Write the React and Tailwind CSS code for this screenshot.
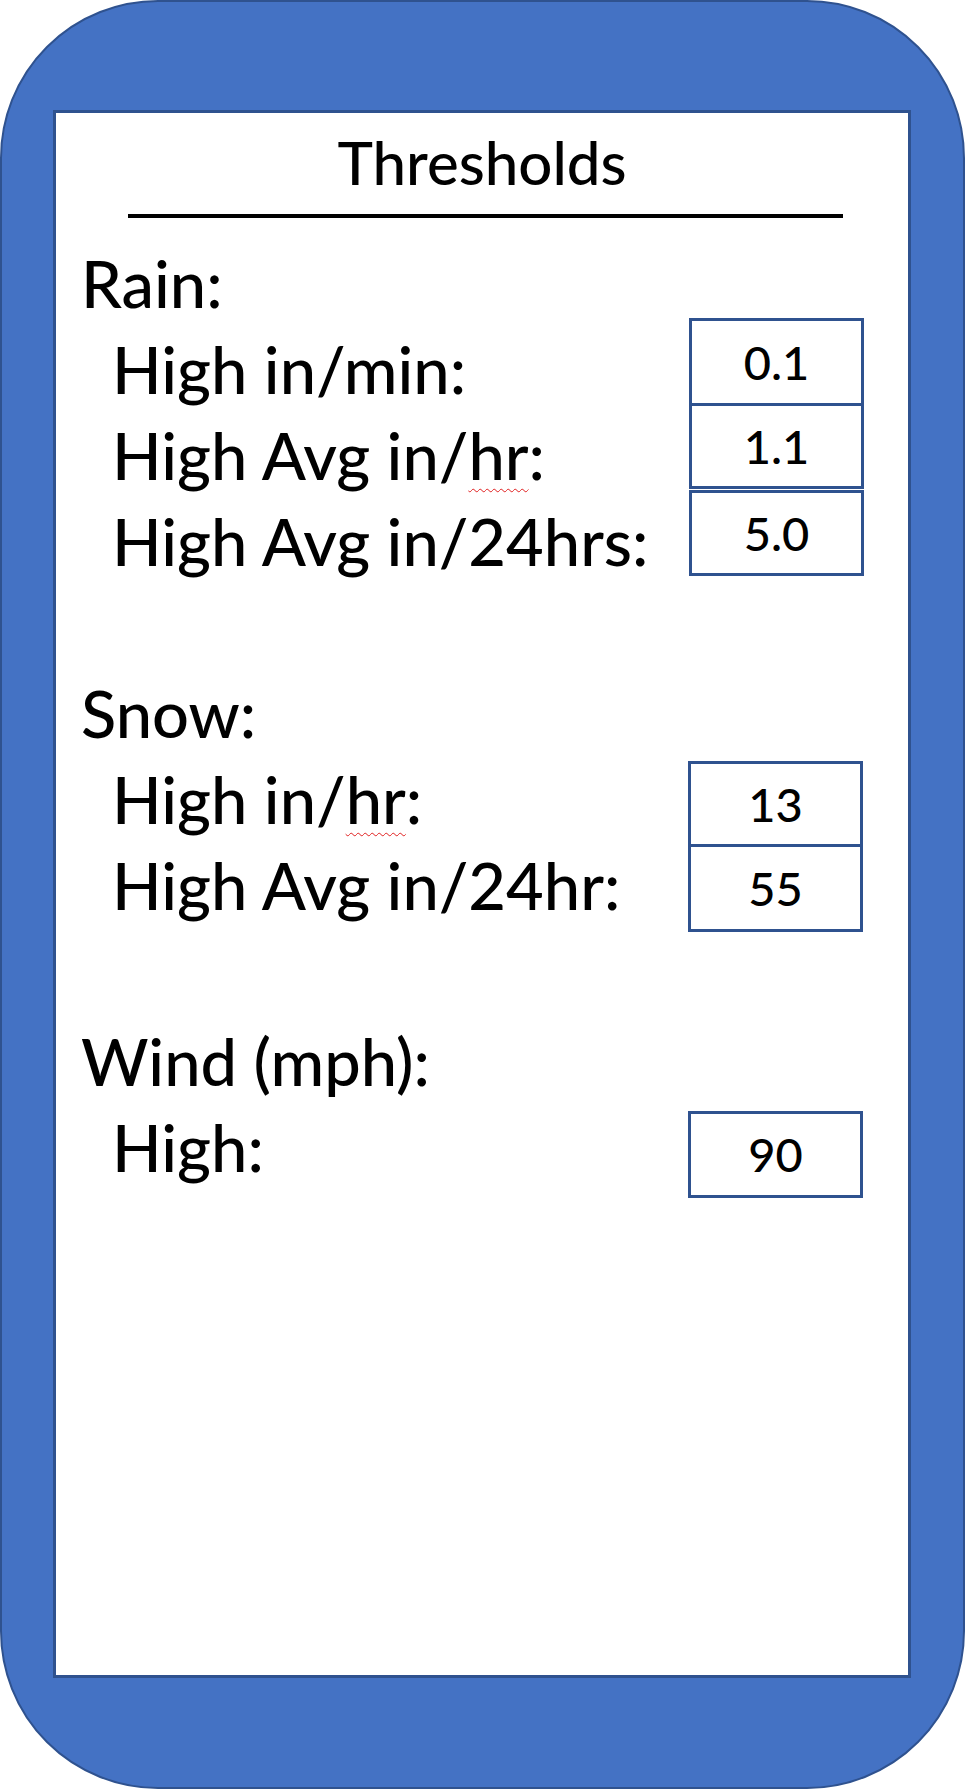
import React from "react";

function Hr() {
  return (
    <span className="underline decoration-wavy decoration-[#e02020] decoration-[1px] underline-offset-[8px]">hr</span>
  );
}

function Cell({ children, className = "" }) {
  return (
    <div
      className={
        "w-[175px] border-[3px] border-[#2F528F] bg-white flex items-center justify-center text-[47px] leading-none text-black " +
        className
      }
    >
      {children}
    </div>
  );
}

function Line({ children, indent }) {
  return (
    <div className={"h-[86px] leading-[86px] whitespace-nowrap " + (indent ? "pl-[31px]" : "")}>
      {children}
    </div>
  );
}

export default function App() {
  return (
    <div className="w-[965px] h-[1789px] bg-white font-['Lato',sans-serif] font-medium text-black">
      <div className="w-[965px] h-[1789px] bg-[#4472C4] border-2 border-[#2F528F] rounded-[158px] pt-[108px] pl-[51px]">
        <div className="w-[858px] h-[1568px] bg-white border-[3px] border-[#2F528F] flex flex-col">
          <div className="mt-[14px] h-[70px] leading-[70px] text-[60px] text-center">Thresholds</div>
          <div className="mt-[17px] ml-[72px] w-[715px] h-[4px] bg-black"></div>

          <div className="mt-[22px] pl-[25px] text-[65px] flex flex-col">
            {/* Rain */}
            <div className="flex">
              <div className="w-[608px] flex flex-col">
                <Line>Rain:</Line>
                <Line indent>High in/min:</Line>
                <Line indent>
                  High Avg in/<Hr />:
                </Line>
                <Line indent>High Avg in/24hrs:</Line>
              </div>
              <div className="mt-[78px] flex flex-col">
                <Cell className="h-[88px]">0.1</Cell>
                <Cell className="h-[86px] -mt-[3px]">1.1</Cell>
                <Cell className="h-[86px] mt-[1px]">5.0</Cell>
              </div>
            </div>

            <div className="h-[86px]"></div>

            {/* Snow */}
            <div className="flex">
              <div className="w-[607px] flex flex-col">
                <Line>Snow:</Line>
                <Line indent>
                  High in/<Hr />:
                </Line>
                <Line indent>High Avg in/24hr:</Line>
              </div>
              <div className="mt-[91px] flex flex-col">
                <Cell className="h-[86px]">13</Cell>
                <Cell className="h-[88px] -mt-[3px]">55</Cell>
              </div>
            </div>

            <div className="h-[86px]"></div>

            {/* Wind */}
            <div className="flex">
              <div className="w-[607px] flex flex-col">
                <Line>Wind (mph):</Line>
                <Line indent>High:</Line>
              </div>
              <div className="mt-[93px] flex flex-col">
                <Cell className="h-[87px]">90</Cell>
              </div>
            </div>
          </div>
        </div>
      </div>
    </div>
  );
}
